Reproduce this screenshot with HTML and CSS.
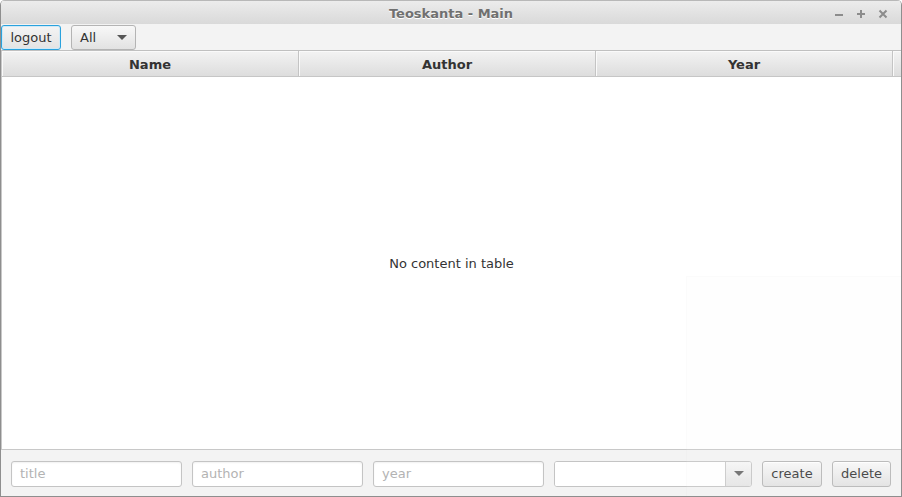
FILE: index.html
```html
<!DOCTYPE html>
<html>
<head>
<meta charset="utf-8">
<link rel="stylesheet" href="styles.css">
</head>
<body>
<div class="window">
  <div class="titlebar">
    <span class="title">Teoskanta - Main</span>
    <div class="wctrls">
      <svg width="10" height="10" viewBox="0 0 10 10"><rect x="1" y="5" width="8" height="2" fill="#8c8c8c"/></svg>
      <svg width="10" height="10" viewBox="0 0 10 10"><rect x="1" y="4" width="8" height="2" fill="#8c8c8c"/><rect x="4" y="1" width="2" height="8" fill="#8c8c8c"/></svg>
      <svg width="10" height="10" viewBox="0 0 10 10"><path d="M1.5 1.5 L8.5 8.5 M8.5 1.5 L1.5 8.5" stroke="#8c8c8c" stroke-width="2"/></svg>
    </div>
  </div>
  <div class="toolbar">
    <button class="btn focused">logout</button>
    <div class="combo small"><span class="combo-val">All</span><span class="tri"></span></div>
  </div>
  <div class="table">
    <div class="thead">
      <div class="th">Name</div>
      <div class="th">Author</div>
      <div class="th">Year</div>
      <div class="th filler"></div>
    </div>
    <div class="tbody">No content in table</div>
  </div>
  <div class="bottom">
    <div class="input">title</div>
    <div class="input">author</div>
    <div class="input">year</div>
    <div class="combo wide"><span class="combo-field"></span><span class="arrow-box"><span class="tri"></span></span></div>
    <button class="btn create">create</button>
    <button class="btn delete">delete</button>
  </div>
  <div class="ghost"><span>Screenshot</span></div>
</div>
</body>
</html>
```
FILE: styles.css
```css
* { box-sizing: border-box; }
html, body { margin: 0; padding: 0; }
body {
  width: 902px; height: 497px; overflow: hidden;
  font-family: "DejaVu Sans", sans-serif; font-size: 13px; color: #333;
  background: #fff;
}
.window {
  position: relative;
  width: 902px; height: 497px;
  display: flex; flex-direction: column;
  border: 1px solid #8e8e8e; border-top: none;
  border-radius: 5px 5px 0 0;
  background: #f3f3f3;
  overflow: hidden;
}
.titlebar {
  height: 24px; flex: none;
  display: flex; align-items: center; justify-content: center;
  padding-top: 2px;
  background: linear-gradient(#ececec, #d9d9d9);
  border-top: 1px solid #b8b8b8;
  position: relative;
}
.title {
  font-weight: bold; font-size: 13px; color: #707070;
  text-shadow: 0 1px 0 #fff;
}
.wctrls {
  position: absolute; right: 13px; top: 8px;
  display: flex; gap: 12px;
}
.wctrls svg { display: block; }
.toolbar {
  height: 26px; flex: none;
  display: flex; align-items: center; gap: 10px;
  background: #f3f3f3;
}
.btn {
  font-family: "DejaVu Sans", sans-serif; font-size: 13px; color: #333;
  height: 25px; padding: 0 8px;
  border: 1px solid #b4b4b4; border-radius: 3px;
  background: linear-gradient(#f8f8f8, #e2e2e2);
  box-shadow: inset 0 1px 0 #fff;
}
.btn.focused {
  width: 60px; height: 25px;
  border: 1px solid #2aa2dd;
  box-shadow: inset 0 0 0 1px #cfe9f7;
  background: linear-gradient(#f4f4f4, #e3e3e3);
}
.combo {
  display: flex; align-items: center;
  border: 1px solid #b4b4b4; border-radius: 3px;
  background: linear-gradient(#f8f8f8, #e2e2e2);
  height: 25px;
}
.combo.small { width: 65px; padding: 0 8px 0 8px; justify-content: space-between; }
.tri {
  width: 0; height: 0;
  border-left: 5px solid transparent; border-right: 5px solid transparent;
  border-top: 5px solid #555;
}
.table {
  flex: 1; display: flex; flex-direction: column;
  border-top: 1px solid #c0c0c0;
  border-left: 1px solid #c8c8c8;
  background: #fff;
}
.thead {
  height: 26px; flex: none; display: flex;
  background: linear-gradient(#f3f3f3, #dddddd);
  border-bottom: 1px solid #c6c6c6;
}
.th {
  width: 297px; flex: none;
  display: flex; align-items: center; justify-content: center;
  padding-top: 2px;
  font-weight: bold; color: #333;
  border-right: 1px solid #c4c4c4;
  box-shadow: inset 1px 1px 0 #fafafa;
}
.th.filler { width: auto; flex: 1; border-right: none; }
.tbody {
  flex: 1;
  display: flex; align-items: center; justify-content: center;
  color: #333;
  padding-top: 1px;
}
.bottom {
  height: 47px; flex: none;
  display: flex; align-items: center; gap: 10px;
  padding: 1px 0 0 10px;
  border-top: 1px solid #c8c8c8;
  background: #f3f3f3;
}
.input {
  width: 171px; height: 26px;
  border: 1px solid #c4c4c4; border-radius: 3px;
  background: #fff;
  box-shadow: inset 0 1px 2px rgba(0,0,0,0.06);
  color: #b3b3b3; padding: 0 8px;
  display: flex; align-items: center;
}
.combo.wide {
  width: 198px; height: 26px; background: #fff; overflow: hidden;
  border-color: #c4c4c4;
}
.combo-field { flex: 1; height: 100%; background: #fff; }
.arrow-box {
  width: 26px; height: 100%;
  display: flex; align-items: center; justify-content: center;
  border-left: 1px solid #c8c8c8;
  background: linear-gradient(#f6f6f6, #e4e4e4);
}
.arrow-box .tri { border-top-color: #666; }
.btn.create { width: 60px; height: 26px; padding: 0; }
.btn.delete { width: 59px; height: 26px; padding: 0; }
.ghost {
  position: absolute; left: 685px; top: 276px; right: -1px; bottom: -1px;
  background: rgba(250,250,250,0.12);
  border-left: 1px solid rgba(0,0,0,0.012);
  border-top: 1px solid rgba(0,0,0,0.012);
  pointer-events: none;
}
.ghost span {
  position: absolute; left: 114px; top: 4px;
  font-weight: bold; font-size: 12px; color: rgba(0,0,0,0.025);
}
```
